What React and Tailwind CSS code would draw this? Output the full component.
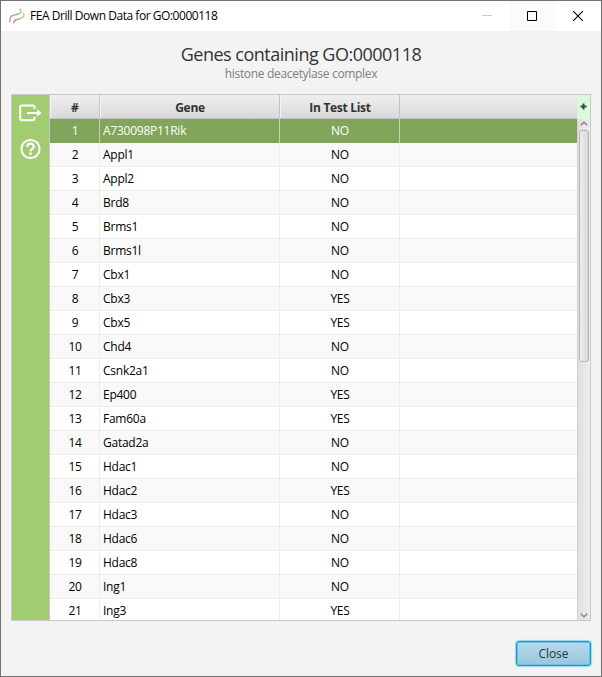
const genes = [
  ['A730098P11Rik', 'NO'], ['Appl1', 'NO'], ['Appl2', 'NO'], ['Brd8', 'NO'],
  ['Brms1', 'NO'], ['Brms1l', 'NO'], ['Cbx1', 'NO'], ['Cbx3', 'YES'],
  ['Cbx5', 'YES'], ['Chd4', 'NO'], ['Csnk2a1', 'NO'], ['Ep400', 'YES'],
  ['Fam60a', 'YES'], ['Gatad2a', 'NO'], ['Hdac1', 'NO'], ['Hdac2', 'YES'],
  ['Hdac3', 'NO'], ['Hdac6', 'NO'], ['Hdac8', 'NO'], ['Ing1', 'NO'], ['Ing3', 'YES'],
];

function TitleBar() {
  return (
    <header className="flex h-[30px] shrink-0 items-center bg-white">
      <svg className="ml-[8px] h-4 w-4 shrink-0" viewBox="0 0 16 16" fill="none" strokeWidth="1.3" strokeLinecap="round">
        <path d="M.8 14C.8 11 1 9.2 2.6 8" stroke="#e08a86" />
        <path d="M2.2 8.2C4 6.4 6.5 7.2 9 6.2" stroke="#86a9cc" />
        <path d="M8.4 6.4C11.8 5.4 13.6 3.4 10.8 .9" stroke="#a3c78d" />
        <path d="M4.8 14.8C5 12.2 6.6 11.6 10.6 10.8" stroke="#dc7b76" />
        <path d="M10.2 10.9C13.8 10.2 15.8 8.2 14.6 5.4" stroke="#a3c78d" />
      </svg>
      <h1 className="ml-[5px] whitespace-nowrap text-[12px] leading-4 tracking-[-0.46px] text-black">FEA Drill Down Data for GO:0000118</h1>
      <div className="ml-auto flex h-full">
        <div className="flex w-[45px] items-center justify-center pr-[2px]">
          <svg width="10" height="10"><path d="M0 4.5H10" stroke="#c8c8c8" /></svg>
        </div>
        <div className="flex w-[45px] items-center justify-center bg-[#fbfbfb] pr-[2px]">
          <svg width="10" height="10"><path d="M.5 .5H9.5V9.5H.5Z" fill="none" stroke="#000" /></svg>
        </div>
        <div className="flex w-[46px] items-center justify-center">
          <svg width="10" height="10"><path d="M0 0L10 10M10 0L0 10" stroke="#000" strokeWidth="1.1" /></svg>
        </div>
      </div>
    </header>
  );
}

function Toolbar() {
  return (
    <aside className="flex w-[37px] shrink-0 flex-col items-center bg-[#a2cc72] pt-[9px] text-white">
      <svg className="h-[18px] w-[23px]" viewBox="0 0 23 18" fill="none" stroke="currentColor" strokeWidth="2" strokeLinejoin="round">
        <path d="M15.5 5V3.5Q15.5 1.5 13.5 1.5H3.2Q1.2 1.5 1.2 3.5V14.2Q1.2 16.2 3.2 16.2H13.5Q15.5 16.2 15.5 14.2V12.8" />
        <path d="M8 9H19" />
        <path d="M18 5.2L22.6 9L18 12.8Z" fill="currentColor" stroke="none" />
      </svg>
      <svg className="mt-[16px] h-[22px] w-[22px]" viewBox="0 0 22 22" fill="none" stroke="currentColor" strokeWidth="2">
        <circle cx="10.5" cy="11" r="9.1" />
        <path d="M7.2 8.8C7.2 4.6 13.8 4.6 13.8 8.5C13.8 10.7 10.5 10.9 10.5 13.4" strokeWidth="2.2" />
        <path d="M10.5 14.5V16.8" strokeWidth="2.3" />
      </svg>
    </aside>
  );
}

const grid = 'grid grid-cols-[50px_180px_120px_1fr]';
const headCell = 'flex items-center justify-center border-r border-[#c4c4c4] border-l border-l-[#f4f4f4] pt-[2px]';

function Table() {
  return (
    <div className="min-w-0 flex-1 overflow-hidden">
      <div className={`${grid} h-6 border-b border-[#c4c4c4] bg-linear-to-b from-[#efefef] to-[#d9d9d9] text-[12px] leading-4 font-bold text-[#333]`}>
        <div className={headCell}>#</div>
        <div className={`${headCell} tracking-[-0.3px]`}>Gene</div>
        <div className={`${headCell} tracking-[-0.3px]`}>In Test List</div>
        <div />
      </div>
      {genes.map(([gene, listed], i) => {
        const selected = i === 0;
        const line = selected ? 'border-[#c3d5b0]' : 'border-[#ededed]';
        return (
          <div
            key={gene}
            className={`${grid} h-6 text-[12px] leading-6 tracking-[-0.25px] ${selected ? 'bg-[#81a55a] text-white' : i % 2 ? 'border-b border-[#ededed] bg-[#f9f9f9] text-black' : 'border-b border-[#ededed] bg-white text-black'}`}
          >
            <div className={`border-r pl-px text-center ${line}`}>{i + 1}</div>
            <div className={`border-r pl-[3px] ${line}`}>{gene}</div>
            <div className={`border-r pl-px text-center ${line}`}>{listed}</div>
            <div />
          </div>
        );
      })}
    </div>
  );
}

function ScrollColumn() {
  return (
    <div className="flex w-[13px] shrink-0 flex-col">
      <div className="flex h-6 shrink-0 items-center justify-center bg-[#dbfadb]">
        <svg width="7" height="7" className="-mt-px"><path d="M3.5 .5V6.5M.5 3.5H6.5" stroke="#444" strokeWidth="2" /></svg>
      </div>
      <div className="flex flex-1 flex-col items-center border-l border-[#d0d0d0] bg-linear-to-r from-[#e0e0e0] to-[#ededed]">
        <svg className="mt-[2px] shrink-0" width="8" height="5"><path d="M.7 4.2L4 1.2L7.3 4.2" fill="none" stroke="#858585" strokeWidth="1.4" /></svg>
        <div className="mt-[4px] h-[232px] w-[10px] shrink-0 rounded-[3px] border border-[#b3b3b3] bg-linear-to-r from-[#f0f0f0] to-[#d6d6d6]" />
        <svg className="mt-auto mb-[2px] shrink-0" width="8" height="5"><path d="M.7 .8L4 3.8L7.3 .8" fill="none" stroke="#858585" strokeWidth="1.4" /></svg>
      </div>
    </div>
  );
}

export default function App() {
  return (
    <div className="flex h-[677px] w-[602px] flex-col overflow-hidden border border-[#727272] bg-[#f3f3f3] font-['Open_Sans','Noto_Sans',sans-serif]">
      <TitleBar />
      <div className="flex h-[63px] shrink-0 flex-col items-center pt-[11px]">
        <h2 className="text-[18px] leading-[24px] tracking-[-0.5px] text-[#333]">Genes containing GO:0000118</h2>
        <p className="text-[12px] leading-[16px] tracking-[-0.32px] text-[#808080]">histone deacetylase complex</p>
      </div>
      <div className="ml-[10px] flex h-[527px] w-[580px] shrink-0 border border-[#c8c8c8]">
        <Toolbar />
        <div className="w-px shrink-0 bg-[#c8c8c8]" />
        <Table />
        <ScrollColumn />
      </div>
      <button className="mt-[20px] mr-[10px] h-[25px] w-[75px] shrink-0 self-end rounded-[3px] border border-[#039ed3] bg-linear-to-b from-[#b7dbec] to-[#98c6dc] text-[12px] leading-none tracking-[-0.1px] text-[#333] shadow-[0_0_1px_1px_#9bd7ec,inset_0_0_0_1px_#6fbfdf]">Close</button>
    </div>
  );
}
